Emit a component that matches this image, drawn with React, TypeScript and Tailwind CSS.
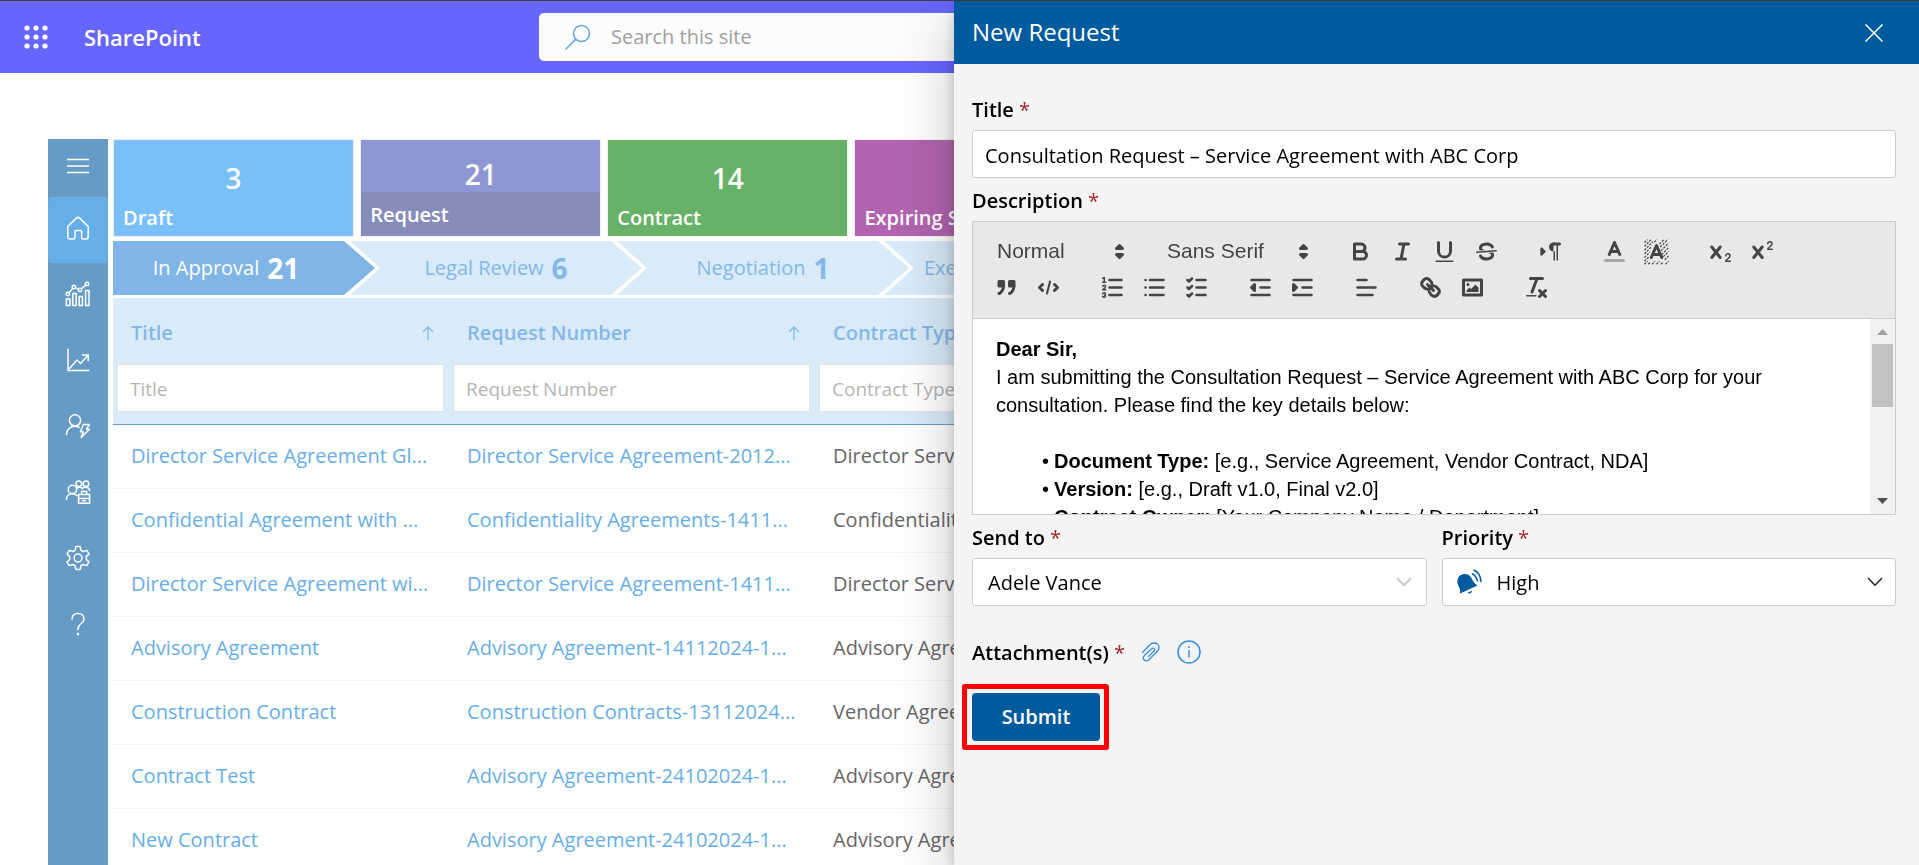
import React from "react";

const SANS = "font-['Open_Sans','Noto_Sans',sans-serif]";
const ARIAL = "font-['Liberation_Sans',Arial,sans-serif]";

/* ---------- sidebar icons ---------- */

function NavIcon({ children }: { children: React.ReactNode }) {
  return (
    <svg
      viewBox="0 0 26 26"
      className="size-[26px] fill-none stroke-white stroke-[1.5]"
      strokeLinecap="round"
      strokeLinejoin="round"
      aria-hidden="true"
    >
      {children}
    </svg>
  );
}

const navItems: { label: string; icon: React.ReactNode }[] = [
  {
    label: "Home",
    icon: (
      <path d="M2.8 11.5 11.6 2.9Q13 1.8 14.4 2.9L23.2 11.5V21.8Q23.2 24 21 24H18Q16.6 24 16.6 22.4V16.6Q16.6 15.4 15.4 15.4H11.2Q10 15.4 10 16.6V22.4Q10 24 8.6 24H5Q2.8 24 2.8 21.8Z" />
    ),
  },
  {
    label: "Reports",
    icon: (
      <>
        <path d="M1.4 24.6V18H5V24.6ZM7.8 24.6V12.5H11.2V24.6ZM14.2 24.6V15.5H17.4V24.6ZM20.6 24.6V9.5H24V24.6Z" />
        <path d="M4.2 11.8 7.4 7.6M10.6 6.6 13.4 8.2M16.6 7.8 20.6 4" />
        <circle cx="2.8" cy="13" r="1.7" />
        <circle cx="8.8" cy="6" r="1.7" />
        <circle cx="15" cy="9" r="1.7" />
        <circle cx="22" cy="3" r="1.7" />
      </>
    ),
  },
  {
    label: "Trends",
    icon: (
      <path
        d="M3 2.5V23.5H23.6M4.5 21.5 12 13 15.5 16.5 22.8 8.4M17.6 8H23.2V13.4"
        strokeLinecap="square"
        strokeLinejoin="miter"
      />
    ),
  },
  {
    label: "Automations",
    icon: (
      <>
        <circle cx="10" cy="7.4" r="5.6" />
        <path d="M1.4 21.5C1.4 16.4 5.4 13.2 10 13.2 11.6 13.2 13 13.6 14.2 14.4" />
        <path d="M18.4 11.6H24.4L21.4 16.2H24.4L16.2 24.6 18.2 18.8H15.4Z" />
      </>
    ),
  },
  {
    label: "Teams",
    icon: (
      <>
        <circle cx="7.4" cy="10.4" r="4.2" />
        <path d="M1.4 20.4C1.4 17 4 14.8 7.4 14.8 9.4 14.8 11 15.4 12 16.6" />
        <circle cx="13.8" cy="4.8" r="2.8" />
        <circle cx="21" cy="4.8" r="2.8" />
        <path d="M11.8 10C12.6 8.4 16.6 7.2 17.4 10C18.4 7.4 24 7.2 24.6 11.4" />
        <path
          d="M13.6 15.6H24.6V24.2H13.6ZM16.6 15.4V12.6H21.6V15.4M13.6 19.6H24.6M17.8 21.8H20.4"
          strokeLinejoin="miter"
        />
      </>
    ),
  },
  {
    label: "Settings",
    icon: (
      <>
        <circle cx="13" cy="13" r="3.9" />
        <path d="M10.9 1.6H15.1L16 5.3 18.1 6.5 21.7 5.4 24 8.9 21.3 11.6V14.4L24 17.1 21.7 20.6 18.1 19.5 16 20.7 15.1 24.4H10.9L10 20.7 7.9 19.5 4.3 20.6 2 17.1 4.7 14.4V11.6L2 8.9 4.3 5.4 7.9 6.5 10 5.3Z" />
      </>
    ),
  },
  {
    label: "Help",
    icon: (
      <>
        <path d="M7 8.2C7 4.4 9.6 2.4 13 2.4S19 4.6 19 8C19 12.4 13 12.8 13 17.8V18.6" />
        <path d="M13 23V23.4" strokeWidth="2.4" />
      </>
    ),
  },
];

function Sidebar() {
  return (
    <nav aria-label="Main" className="flex w-[60px] shrink-0 flex-col bg-[#669bc5]">
      <button type="button" aria-label="Toggle menu" className="flex h-[58px] shrink-0 items-center justify-center pb-1">
        <svg viewBox="0 0 22 16" className="h-4 w-[22px] stroke-white stroke-[1.5]" aria-hidden="true">
          <path d="M0 1.5H22M0 8H22M0 14.5H22" />
        </svg>
      </button>
      {navItems.map((item, i) => (
        <a
          key={item.label}
          href="#"
          aria-label={item.label}
          className={
            i === 0
              ? "flex h-[66px] shrink-0 items-center justify-center rounded bg-[#66aee7] pb-1"
              : "flex h-[66px] shrink-0 items-center justify-center pb-1"
          }
        >
          <NavIcon>{item.icon}</NavIcon>
        </a>
      ))}
    </nav>
  );
}

/* ---------- page behind the panel ---------- */

function TopBar() {
  return (
    <header className="flex h-[72px] shrink-0 items-center bg-[#6666ff]">
      <div className="flex w-[539px] shrink-0 items-center gap-9 pl-6">
        <button type="button" aria-label="App launcher">
          <svg viewBox="0 0 24 24" className="size-6 fill-white" aria-hidden="true">
            {[3, 12, 21].map((y) =>
              [3, 12, 21].map((x) => <circle key={`${x}-${y}`} cx={x} cy={y} r="2.6" />)
            )}
          </svg>
        </button>
        <a href="#" className="text-[22px] leading-8 font-semibold text-white">
          SharePoint
        </a>
      </div>
      <label className="flex h-12 grow items-center gap-5 rounded-[5px] bg-[#fcfcfc] pl-[26px]">
        <svg
          viewBox="0 0 26 26"
          className="size-[26px] fill-none stroke-[#66a5dd] stroke-[1.5]"
          strokeLinecap="round"
          aria-hidden="true"
        >
          <circle cx="16.5" cy="9.5" r="8" />
          <path d="M10.6 15.4 1 25" />
        </svg>
        <input
          type="search"
          aria-label="Search this site"
          placeholder="Search this site"
          className="grow bg-transparent text-[20px] outline-none placeholder:text-[#a0a0a0]"
        />
      </label>
    </header>
  );
}

function Tile({ count, label, color, active }: { count?: string; label: string; color: string; active?: boolean }) {
  return (
    <a href="#" className={`flex h-[98px] flex-col border border-[#f0f0f0] text-white ${color}`}>
      <span
        className={
          active
            ? "flex h-[52px] items-end justify-center text-[28px] leading-9 font-semibold"
            : "flex h-[56px] items-end justify-center text-[28px] leading-9 font-semibold"
        }
      >
        {count}
      </span>
      <span
        className={
          active
            ? "flex grow items-center bg-[#868dba] px-[9px] pt-[2px] text-[20px] leading-7 font-semibold whitespace-nowrap"
            : "flex grow items-center px-[9px] pt-1 text-[20px] leading-7 font-semibold whitespace-nowrap"
        }
      >
        {label}
      </span>
    </a>
  );
}

const steps = [
  { label: "In Approval", count: "21", shape: "first" },
  { label: "Legal Review", count: "6", shape: "middle" },
  { label: "Negotiation", count: "1", shape: "middle" },
  { label: "Execution", count: "", shape: "last" },
];

const stepShapes: Record<string, string> = {
  first:
    "w-[262px] justify-center bg-[#80b5e6] pr-9 text-white [clip-path:polygon(0_0,231px_0,100%_50%,231px_100%,0_100%)]",
  middle:
    "w-[292px] justify-center bg-[#d9eaf8] text-[#83b8e8] [clip-path:polygon(0_0,calc(100%-31px)_0,100%_50%,calc(100%-31px)_100%,0_100%,30px_50%)]",
  last:
    "w-[292px] justify-start bg-[#d9eaf8] pl-10 text-[#83b8e8] [clip-path:polygon(0_0,calc(100%-31px)_0,100%_50%,calc(100%-31px)_100%,0_100%,30px_50%)]",
};

function Steps() {
  return (
    <ol className="mb-[3px] flex h-[54px] shrink-0">
      {steps.map((s) => (
        <li key={s.label} className={`-mr-[25px] flex shrink-0 items-center gap-2 ${stepShapes[s.shape]}`}>
          <span className="text-[20px] leading-7">{s.label}</span>
          {s.count && <span className="text-[28px] leading-9 font-bold">{s.count}</span>}
        </li>
      ))}
    </ol>
  );
}

const rows = [
  ["Director Service Agreement Gl...", "Director Service Agreement-2012...", "Director Service"],
  ["Confidential Agreement with ...", "Confidentiality Agreements-1411...", "Confidentiality"],
  ["Director Service Agreement wi...", "Director Service Agreement-1411...", "Director Service"],
  ["Advisory Agreement", "Advisory Agreement-14112024-1...", "Advisory Agreement"],
  ["Construction Contract", "Construction Contracts-13112024...", "Vendor Agreement"],
  ["Contract Test", "Advisory Agreement-24102024-1...", "Advisory Agreement"],
  ["New Contract", "Advisory Agreement-24102024-1...", "Advisory Agreement"],
];

function SortArrow() {
  return (
    <svg viewBox="0 0 12 14" className="h-[14px] w-3 fill-none stroke-[#83b8e8] stroke-[1.3]" aria-hidden="true">
      <path d="M6 14V1M1 6 6 1 11 6" />
    </svg>
  );
}

function RequestTable() {
  const headers = ["Title", "Request Number", "Contract Type"];
  return (
    <table className="w-full table-fixed border-collapse text-left text-[20px]">
      <colgroup>
        <col className="w-[336px]" />
        <col className="w-[366px]" />
        <col />
      </colgroup>
      <thead>
        <tr className="h-[126px] border-b border-[#669bc5] bg-[#d9eaf8]">
          {headers.map((h) => (
            <th key={h} className="px-1 py-0 align-top font-semibold text-[#83b8e8]">
              <div className="flex h-[66px] items-center justify-between pt-1 pr-[11px] pl-[14px]">
                {h}
                <SortArrow />
              </div>
              <input
                type="text"
                aria-label={`Filter by ${h}`}
                placeholder={h}
                className="block h-12 w-[calc(100%-1px)] border border-[#e3e3e3] bg-white pt-[2px] pl-3 text-[19px] font-normal outline-none placeholder:text-[#b4b4b4]"
              />
            </th>
          ))}
        </tr>
      </thead>
      <tbody>
        {rows.map((r, i) => (
          <tr key={i} className="h-16 border-b border-[#f4f4f4]">
            <td className="pl-[18px] whitespace-nowrap text-[#66aee7]">
              <a href="#">{r[0]}</a>
            </td>
            <td className="pl-[18px] whitespace-nowrap text-[#66aee7]">
              <a href="#">{r[1]}</a>
            </td>
            <td className="pl-[18px] whitespace-nowrap text-[#666666]">{r[2]}</td>
          </tr>
        ))}
      </tbody>
    </table>
  );
}

/* ---------- rich text editor ---------- */

function ToolIcon({ label, children }: { label: string; children: React.ReactNode }) {
  return (
    <button type="button" aria-label={label} className="flex h-9 w-[42px] items-center justify-center">
      <svg
        viewBox="0 0 18 18"
        className="size-[27px] fill-none stroke-[#444444] stroke-2"
        strokeLinecap="round"
        strokeLinejoin="round"
        aria-hidden="true"
      >
        {children}
      </svg>
    </button>
  );
}

const solid = { fill: "#444444", stroke: "none" };

function Picker({ label, value, width }: { label: string; value: string; width: string }) {
  return (
    <span className={`relative flex h-9 items-center ${width}`}>
      <select
        aria-label={label}
        defaultValue={value}
        className={`h-full w-full appearance-none bg-transparent pl-3 text-[21px] text-[#444444] outline-none ${ARIAL}`}
      >
        <option>{value}</option>
      </select>
      <svg
        viewBox="0 0 18 18"
        className="pointer-events-none absolute right-0 size-[27px] fill-[#444444] stroke-[#444444] stroke-2"
        strokeLinejoin="round"
        aria-hidden="true"
      >
        <path d="M7 11 9 13 11 11ZM7 7 9 5 11 7Z" />
      </svg>
    </span>
  );
}

function Toolbar() {
  return (
    <div className="border border-[#cccccc] bg-[#e8e8e8] px-3 pt-[11px] pb-[13px]">
      <div className="flex gap-[22px]">
        <Picker label="Heading" value="Normal" width="w-[148px]" />
        <Picker label="Font" value="Sans Serif" width="w-[162px]" />
        <div className="flex">
          <ToolIcon label="Bold">
            <path d="M5,4H9.5a2.5,2.5,0,0,1,0,5H5ZM5,9h5.5a2.5,2.5,0,0,1,0,5H5Z" />
          </ToolIcon>
          <ToolIcon label="Italic">
            <path d="M7,4H13M5,14H11M8,14 10,4" />
          </ToolIcon>
          <ToolIcon label="Underline">
            <path d="M5,3V9a4.012,4.012,0,0,0,8,0V3" />
            <rect {...solid} height="1" rx="0.5" width="12" x="3" y="15" />
          </ToolIcon>
          <ToolIcon label="Strikethrough">
            <path strokeWidth="1" d="M15.5,8.5 2.5,9.5" />
            <path
              {...solid}
              d="M9.007,8C6.542,7.791,6,7.519,6,6.5,6,5.792,7.283,5,9,5c1.571,0,2.765.679,2.969,1.309a1,1,0,0,0,1.9-.617C13.356,4.106,11.354,3,9,3,6.2,3,4,4.538,4,6.5a3.2,3.2,0,0,0,.5,1.843Z"
            />
            <path
              {...solid}
              d="M8.984,10C11.457,10.208,12,10.479,12,11.5c0,0.708-1.283,1.5-3,1.5-1.571,0-2.765-.679-2.969-1.309a1,1,0,1,0-1.9.617C4.644,13.894,6.646,15,9,15c2.8,0,5-1.538,5-3.5a3.2,3.2,0,0,0-.5-1.843Z"
            />
          </ToolIcon>
        </div>
        <div className="flex">
          <ToolIcon label="Text direction">
            <path fill="#444444" d="M3,11 5,9 3,7Z" strokeWidth="1.6" />
            <path d="M15,4H11" />
            <path {...solid} d="M11,3a3,3,0,0,0,0,6h1V3ZM11,4h1V15h-1ZM13,4h1V15h-1Z" />
          </ToolIcon>
        </div>
        <div className="flex">
          <ToolIcon label="Text color">
            <path strokeOpacity="0.4" d="M3,15H15" />
            <path d="M5.5,11 9,3 12.5,11M11.63,9H6.38" />
          </ToolIcon>
          <ToolIcon label="Background color">
            <path
              strokeWidth="0.8"
              strokeDasharray="1.5 0.8"
              strokeLinecap="butt"
              d="M1,3 3,1M1,5.5 5.5,1M1,8 6.5,2.5M1,10.5 5.5,6M1,13 4.5,9.5M1,15.5 4,12.5M1,17.5 3,15.5M3.5,17.5 5,16M6,17.5 8,15.5M9,17.5 11,15.5M12,17.5 13.5,16M15,17.5 17,15.5M14.5,14.5 17,12M13.5,12.5 17,9M12.5,11 17,6.5M12,8.5 17,3.5M11.5,6 16.5,1M11,4 14,1M7.5,2.8 9.3,1"
            />
            <path d="M5.5,13 9,5 12.5,13M11.63,11H6.38" />
          </ToolIcon>
        </div>
        <div className="flex">
          <ToolIcon label="Subscript">
            <path d="M3.2,6 8.8,13M8.8,6 3.2,13" />
            <path strokeWidth="1" d="M12.5,11.8a1.4,1.4,0,0,1,2.8,.2c0,1.6-2.8,2.3-2.8,3.5h3" />
          </ToolIcon>
          <ToolIcon label="Superscript">
            <path d="M3.2,6 8.8,13M8.8,6 3.2,13" />
            <path strokeWidth="1" d="M12.5,3.8a1.4,1.4,0,0,1,2.8,.2c0,1.6-2.8,2.3-2.8,3.5h3" />
          </ToolIcon>
        </div>
      </div>
      <div className="flex gap-[22px]">
        <div className="flex">
          <ToolIcon label="Blockquote">
            <path fill="#444444" d="M4,5H7V8H4ZM11,5h3V8H11Z" />
            <path fill="#444444" d="M7,8c0,4.031-3,5-3,5M14,8c0,4.031-3,5-3,5" />
          </ToolIcon>
          <ToolIcon label="Code block">
            <path d="M5,7 3,9 5,11M13,7 15,9 13,11" />
            <path d="M10,5 8,13" strokeWidth="1.4" />
          </ToolIcon>
        </div>
        <div className="flex">
          <ToolIcon label="Numbered list">
            <path d="M7,4H15M7,9H15M7,14H15" strokeWidth="1.7" />
            <path
              strokeWidth="1"
              d="M2.5,2.8 3.5,2.4V5.5M2.5,5.5H4.5M4.5,10.5h-2c0-.234,1.85-1.076,1.85-2.234A0.959,0.959,0,0,0,2.5,8.156M2.5,14.846a0.959,0.959,0,0,0,1.85-.109A0.7,0.7,0,0,0,3.75,14a0.688,0.688,0,0,0,.6-0.736,0.959,0.959,0,0,0-1.85-.109"
            />
          </ToolIcon>
          <ToolIcon label="Bulleted list">
            <path d="M6,4H15M6,9H15M6,14H15M3,4H3.1M3,9H3.1M3,14H3.1" strokeWidth="1.7" />
          </ToolIcon>
          <ToolIcon label="Checklist">
            <path d="M9,4H15M9,9H15M9,14H15M3,4 4,5 6,3M3,9 4,10 6,8M3,14 4,15 6,13" strokeWidth="1.7" />
          </ToolIcon>
        </div>
        <div className="flex">
          <ToolIcon label="Decrease indent">
            <path d="M3,4H15M9,9H15M3,14H15" strokeWidth="1.7" />
            <path fill="#444444" d="M5,7V11L3,9Z" />
          </ToolIcon>
          <ToolIcon label="Increase indent">
            <path d="M3,4H15M9,9H15M3,14H15" strokeWidth="1.7" />
            <path fill="#444444" d="M3,7V11L5,9Z" />
          </ToolIcon>
        </div>
        <div className="flex">
          <ToolIcon label="Align">
            <path d="M3,4H9M3,9H15M3,14H13" strokeWidth="1.7" />
          </ToolIcon>
        </div>
        <div className="flex">
          <ToolIcon label="Link">
            <path d="M7,7 11,11" />
            <path d="M8.9,4.577a3.476,3.476,0,0,1,.36,4.679A3.476,3.476,0,0,1,4.577,8.9C3.185,7.5,2.035,6.4,4.217,4.217S7.5,3.185,8.9,4.577Z" />
            <path d="M13.423,9.1a3.476,3.476,0,0,0-4.679-.36,3.476,3.476,0,0,0,.36,4.679c1.392,1.392,2.5,2.542,4.679.36S14.815,10.5,13.423,9.1Z" />
          </ToolIcon>
          <ToolIcon label="Image">
            <rect height="10" width="12" x="3" y="4" />
            <circle {...solid} cx="6" cy="7" r="1" />
            <path {...solid} d="M5,12V11L7,9 8,10 11,7 13,9V12Z" />
          </ToolIcon>
        </div>
        <div className="flex">
          <ToolIcon label="Clear formatting">
            <path d="M5,3H13M6,12 9.35,3M11,11 15,15M15,11 11,15" />
            <rect {...solid} height="1" rx="0.5" width="7" x="2" y="14" />
          </ToolIcon>
        </div>
      </div>
    </div>
  );
}

const details = [
  ["Document Type:", "[e.g., Service Agreement, Vendor Contract, NDA]"],
  ["Version:", "[e.g., Draft v1.0, Final v2.0]"],
  ["Contract Owner:", "[Your Company Name / Department]"],
];

function Editor() {
  return (
    <div role="group" aria-labelledby="description-label">
      <Toolbar />
      <div className="flex h-[196px] overflow-hidden border border-t-0 border-[#cccccc] bg-white">
        <div
          role="textbox"
          aria-multiline="true"
          aria-labelledby="description-label"
          tabIndex={0}
          className={`h-full grow overflow-hidden px-[23px] pt-4 text-[20px] leading-7 text-black outline-none ${ARIAL}`}
        >
          <p>
            <strong>Dear Sir,</strong>
          </p>
          <p>
            I am submitting the Consultation Request – Service Agreement with ABC Corp for your consultation. Please
            find the key details below:
          </p>
          <ul className="mt-7 pl-[46px]">
            {details.map(([k, v]) => (
              <li key={k} className="flex gap-[5px]">
                <span>•</span>
                <span>
                  <strong>{k}</strong> {v}
                </span>
              </li>
            ))}
          </ul>
        </div>
        <div className="flex w-[25px] shrink-0 flex-col items-center bg-[#f1f1f1]" aria-hidden="true">
          <svg viewBox="0 0 25 25" className="size-[25px] fill-[#a3a3a3]">
            <path d="M7 16 12.5 10 18 16Z" />
          </svg>
          <div className="h-[63px] w-[21px] bg-[#c1c1c1]" />
          <svg viewBox="0 0 25 25" className="mt-auto size-[25px] fill-[#505050]">
            <path d="M7 9 12.5 15 18 9Z" />
          </svg>
        </div>
      </div>
    </div>
  );
}

/* ---------- side panel ---------- */

function Required() {
  return <span className="ml-[5px] font-normal text-[#a4262c]">*</span>;
}

const labelClass = "flex h-[43px] items-center pt-[3px] text-[20px] font-semibold text-black";
const fieldClass =
  "h-12 w-full rounded-[3px] border border-[#cccccc] bg-white pt-[2px] text-[20px] text-black outline-none";

function Chevron({ className }: { className: string }) {
  return (
    <svg viewBox="0 0 16 10" className={`pointer-events-none absolute fill-none ${className}`} aria-hidden="true">
      <path d="M1 1 8 8.2 15 1" />
    </svg>
  );
}

function BellIcon() {
  return (
    <svg viewBox="0 0 26 26" className="pointer-events-none absolute left-[14px] size-[26px]" aria-hidden="true">
      <path
        d="M4.2 24.4 4 20.4 1.8 15.2C.4 10.4 2.6 6.6 6.2 5.4 10.2 4 13.8 5.8 15.4 9L18 13.8 21.4 16.6Z"
        fill="#005a9e"
      />
      <path d="M11.4 23.8 16.2 21.8C15.8 24.2 13.2 25.4 11.4 23.8Z" fill="#005a9e" />
      <path
        d="M16.4 5C18.8 6.2 20.8 8.8 21.4 11.8M18 1.2C22 2.6 24.4 7 24.9 12.4"
        fill="none"
        stroke="#005a9e"
        strokeWidth="1.5"
        strokeLinecap="round"
      />
    </svg>
  );
}

function RequestPanel() {
  return (
    <section
      role="dialog"
      aria-labelledby="panel-title"
      className="fixed top-px right-0 bottom-0 flex w-[965px] max-w-full flex-col bg-[#f4f4f4] shadow-[0_26px_58px_rgba(0,0,0,0.22),0_5px_14px_rgba(0,0,0,0.18)]"
    >
      <header className="flex h-[63px] shrink-0 items-center justify-between bg-[#005a9e] pr-9 pl-[18px]">
        <h2 id="panel-title" className="pb-[2px] text-[24px] text-white">
          New Request
        </h2>
        <button type="button" aria-label="Close">
          <svg viewBox="0 0 18 18" className="size-[18px] stroke-white stroke-[1.5]" aria-hidden="true">
            <path d="M.5 .5 17.5 17.5M17.5 .5 .5 17.5" />
          </svg>
        </button>
      </header>
      <form className="pt-[23px] pr-[23px] pl-[18px]" onSubmit={(e) => e.preventDefault()}>
        <label htmlFor="title" className={labelClass}>
          Title
          <Required />
        </label>
        <input
          id="title"
          type="text"
          defaultValue="Consultation Request – Service Agreement with ABC Corp"
          className={`block px-3 ${fieldClass}`}
        />
        <div id="description-label" className={labelClass}>
          Description
          <Required />
        </div>
        <Editor />
        <div className="grid grid-cols-2 gap-[15px]">
          <div>
            <label htmlFor="send-to" className={labelClass}>
              Send to
              <Required />
            </label>
            <div className="relative flex items-center">
              <select id="send-to" className={`appearance-none px-[15px] ${fieldClass}`}>
                <option>Adele Vance</option>
              </select>
              <Chevron className="right-[15px] h-[10px] w-4 stroke-[#cccccc] stroke-2" />
            </div>
          </div>
          <div>
            <label htmlFor="priority" className={labelClass}>
              Priority
              <Required />
            </label>
            <div className="relative flex items-center">
              <select id="priority" className={`appearance-none px-[54px] ${fieldClass}`}>
                <option>High</option>
              </select>
              <BellIcon />
              <Chevron className="right-[13px] h-[10px] w-4 stroke-[#222222] stroke-[1.5]" />
            </div>
          </div>
        </div>
        <div className="mt-6 flex items-center gap-4">
          <span className={labelClass}>
            Attachment(s)
            <Required />
          </span>
          <button type="button" aria-label="Attach a file">
            <svg
              viewBox="0 0 20 20"
              className="size-5 fill-none stroke-[#3a8fdf] stroke-[1.3]"
              strokeLinecap="round"
              strokeLinejoin="round"
              aria-hidden="true"
            >
              <path d="M1.6 10.2 9 2.8C11.2.6 14.6.4 16.6 2.2 18.6 4 18.4 7.2 16.4 9.2L7.8 17.8C6.4 19.2 4.4 19.2 3.2 18 2 16.8 2.2 14.8 3.4 13.6L11 6.6C11.8 5.8 12.8 6 13.4 6.6 14 7.2 13.8 8.2 13.2 8.8L7.4 14.6" />
            </svg>
          </button>
          <button type="button" aria-label="Attachment information">
            <svg viewBox="0 0 24 24" className="size-6 fill-none stroke-[#3a8fdf] stroke-[1.5]" aria-hidden="true">
              <circle cx="12" cy="12" r="11" />
              <path d="M12 10V17.5M12 6V8" />
            </svg>
          </button>
        </div>
        <div className="mt-[11px] -ml-[10px] inline-flex rounded-[3px] border-5 border-[#ff0000] py-1 pr-1 pl-[5px]">
          <button type="submit" className="h-12 w-32 rounded bg-[#005a9e] text-[20px] font-semibold text-white">
            Submit
          </button>
        </div>
      </form>
    </section>
  );
}

export default function App() {
  return (
    <div className={`flex h-screen flex-col overflow-hidden border-t border-[#483c44] bg-white ${SANS}`}>
      <TopBar />
      <main className="mt-[66px] flex min-h-0 grow gap-[5px] pl-12">
        <Sidebar />
        <div className="flex grow flex-col">
          <div className="mb-1 grid shrink-0 grid-cols-7 gap-[6px] pr-[82px]">
            <Tile count="3" label="Draft" color="bg-[#79bffa]" />
            <Tile count="21" label="Request" color="bg-[#8e97d3]" active />
            <Tile count="14" label="Contract" color="bg-[#67b266]" />
            <Tile label="Expiring Soon" color="bg-[#b264b0]" />
          </div>
          <Steps />
          <RequestTable />
        </div>
      </main>
      <RequestPanel />
    </div>
  );
}
